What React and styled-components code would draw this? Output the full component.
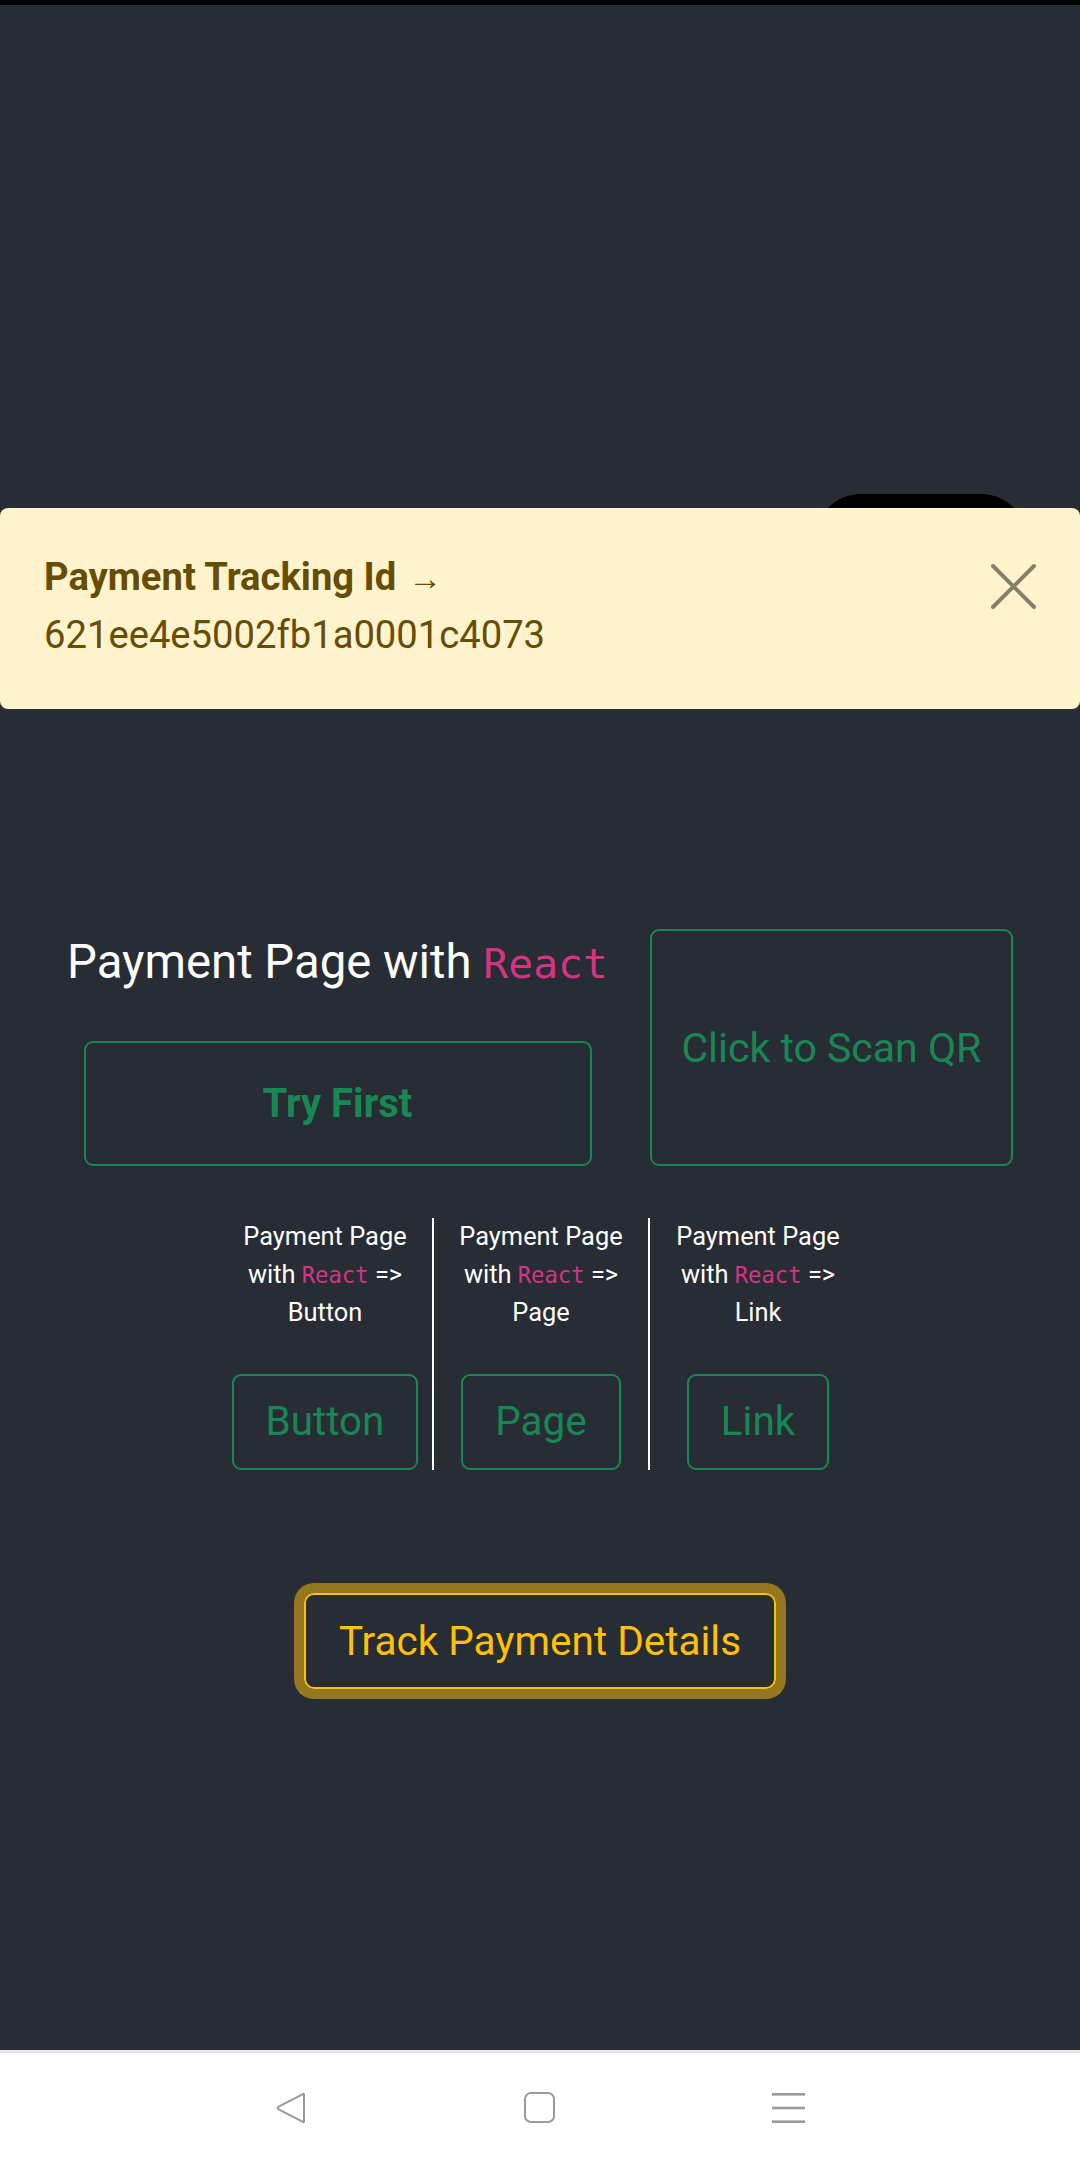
import React from "react";
import styled, { createGlobalStyle } from "styled-components";

const GlobalStyle = createGlobalStyle`
  html, body { margin: 0; padding: 0; }
  body {
    background: #282c34;
    font-family: Roboto, "Liberation Sans", sans-serif;
  }
  * { box-sizing: border-box; }
`;

const Page = styled.div`
  position: relative;
  min-height: 2162px;
  display: flex;
  flex-direction: column;
  background: #282c34;
  overflow: hidden;
`;

const StatusStrip = styled.div`
  height: 5px;
  background: #000;
`;

const Main = styled.main`
  flex: 1;
  display: flex;
  flex-direction: column;
  align-items: center;
  padding-top: 924px;
`;

const FloatingPill = styled.div`
  position: absolute;
  left: 815px;
  top: 494px;
  width: 212px;
  height: 110px;
  border-radius: 46px;
  background: #000;
  z-index: 1;
`;

const Toast = styled.div`
  position: absolute;
  left: 0;
  top: 508px;
  width: 1080px;
  height: 201px;
  z-index: 2;
  display: flex;
  justify-content: space-between;
  align-items: flex-start;
  padding: 41px 43px 0 44px;
  background: #fff3cd;
  border-radius: 8px;
  color: #664d03;
`;

const ToastBody = styled.div`
  display: flex;
  flex-direction: column;
  font-size: 38.2px;
  line-height: 57px;
`;

const ToastTitle = styled.div`
  font-weight: 700;
`;

const Arrow = styled.span`
  font-weight: 700;
  font-size: 34px;
  margin-left: 12px;
`;

const ToastId = styled.div`
  font-weight: 400;
`;

const CloseButton = styled.button`
  width: 47px;
  height: 47px;
  margin-top: 14px;
  padding: 0;
  border: 0;
  background: transparent;
  display: flex;
  align-items: center;
  justify-content: center;
`;

const HeroRow = styled.div`
  display: flex;
  align-items: flex-end;
  gap: 42px;
`;

const HeroLeft = styled.div`
  display: flex;
  flex-direction: column;
  align-items: center;
  gap: 50px;
`;

const Heading = styled.h2`
  margin: 0;
  font-size: 47.3px;
  font-weight: 400;
  line-height: 54px;
  color: #fff;
  white-space: nowrap;
`;

const Code = styled.code`
  font-family: "DejaVu Sans Mono", "Liberation Mono", monospace;
  font-size: 87.5%;
  color: #d63384;
`;

const OutlineBox = styled.button`
  display: flex;
  align-items: center;
  justify-content: center;
  width: ${(p) => p.$w}px;
  height: ${(p) => p.$h}px;
  border: 2px solid #198754;
  border-radius: 9px;
  background: transparent;
  color: #198754;
  font-family: Roboto, "Liberation Sans", sans-serif;
  font-size: ${(p) => p.$size}px;
  font-weight: ${(p) => (p.$bold ? 700 : 400)};
  padding: 0;
`;

const Columns = styled.div`
  display: flex;
  margin-top: 52px;
  margin-left: 4px;
`;

const Column = styled.div`
  width: 216px;
  display: flex;
  flex-direction: column;
  align-items: center;
  gap: 42px;
  padding: 0 8px;
  border-right: ${(p) => (p.$last ? "0" : "2px solid #fff")};
  text-align: center;
`;

const ColumnText = styled.div`
  color: #fff;
  font-size: 25.4px;
  line-height: 37.5px;
`;

const SmallButton = styled.button`
  border: 2px solid #198754;
  border-radius: 9px;
  background: transparent;
  color: #198754;
  font-family: Roboto, "Liberation Sans", sans-serif;
  font-size: 40.4px;
  line-height: 60px;
  padding: 16px 32px;
`;

const TrackButton = styled.button`
  margin-top: 123px;
  border: 2px solid #ffc107;
  border-radius: 10px;
  background: transparent;
  color: #ffc107;
  font-family: Roboto, "Liberation Sans", sans-serif;
  font-size: 40.5px;
  line-height: 60px;
  padding: 16px 33px;
  box-shadow: 0 0 0 10px rgba(255, 193, 7, 0.5);
`;

const NavBar = styled.nav`
  height: 112px;
  background: #fff;
  border-top: 3px solid #e6e6e6;
  display: flex;
  align-items: center;
  justify-content: center;
`;

const NavSlot = styled.div`
  width: 249px;
  display: flex;
  justify-content: center;
  align-items: center;
`;

const columns = [{ label: "Button" }, { label: "Page" }, { label: "Link" }];

export default function App() {
  return (
    <>
      <GlobalStyle />
      <Page>
        <StatusStrip />
        <FloatingPill />
        <Toast>
          <ToastBody>
            <ToastTitle>
              Payment Tracking Id<Arrow>→</Arrow>
            </ToastTitle>
            <ToastId>621ee4e5002fb1a0001c4073</ToastId>
          </ToastBody>
          <CloseButton aria-label="Close">
            <svg width="47" height="47" viewBox="0 0 47 47">
              <path
                d="M3 3 L44 44 M44 3 L3 44"
                stroke="#858069"
                strokeWidth="4"
                strokeLinecap="round"
              />
            </svg>
          </CloseButton>
        </Toast>
        <Main>
          <HeroRow>
            <HeroLeft>
              <Heading>
                Payment Page with <Code>React</Code>
              </Heading>
              <OutlineBox $w={508} $h={125} $size={40} $bold>
                Try First
              </OutlineBox>
            </HeroLeft>
            <OutlineBox $w={363} $h={237} $size={41}>
              Click to Scan QR
            </OutlineBox>
          </HeroRow>
          <Columns>
            {columns.map((c, i) => (
              <Column key={c.label} $last={i === columns.length - 1}>
                <ColumnText>
                  Payment Page with <Code>React</Code> =&gt; {c.label}
                </ColumnText>
                <SmallButton>{c.label}</SmallButton>
              </Column>
            ))}
          </Columns>
          <TrackButton>Track Payment Details</TrackButton>
        </Main>
        <NavBar>
          <NavSlot>
            <svg width="34" height="34" viewBox="0 0 34 34">
              <path
                d="M30 3.5 L30 30.5 Q30 32 28.8 30.8 L4.3 18.2 Q3 17 4.3 15.8 L28.8 3.2 Q30 2 30 3.5 Z"
                fill="none"
                stroke="#9a9a9a"
                strokeWidth="2"
                strokeLinejoin="round"
              />
            </svg>
          </NavSlot>
          <NavSlot>
            <svg width="34" height="34" viewBox="0 0 34 34">
              <rect x="2" y="2" width="29" height="29" rx="6" fill="none" stroke="#9a9a9a" strokeWidth="2" />
            </svg>
          </NavSlot>
          <NavSlot>
            <svg width="34" height="34" viewBox="0 0 34 34">
              <rect x="0" y="2" width="33" height="2.6" fill="#9a9a9a" />
              <rect x="0" y="15.7" width="33" height="2.6" fill="#9a9a9a" />
              <rect x="0" y="29.4" width="33" height="2.6" fill="#9a9a9a" />
            </svg>
          </NavSlot>
        </NavBar>
      </Page>
    </>
  );
}
